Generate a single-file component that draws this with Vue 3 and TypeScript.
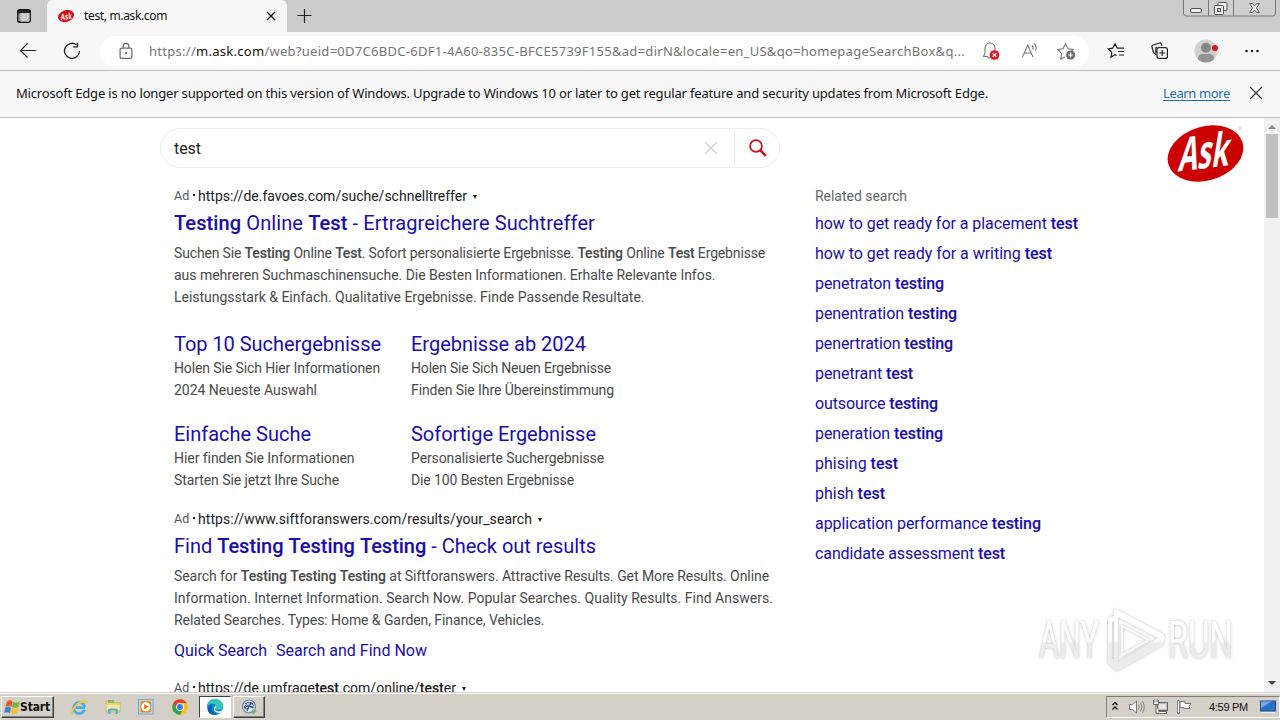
<script setup lang="ts">
interface Piece { t: string; b?: boolean }
interface Line { w: number; parts: Piece[] }
interface SiteLink { title: Line; lines: Line[] }
interface Ad { url: Line; title: Line; lines: Line[] }

// "*word*" marks an emphasised fragment
const line = (text: string, w: number): Line => ({
  w,
  parts: text.split('*').map((t, i) => ({ t, b: i % 2 === 1 })).filter((p) => p.t !== ''),
})

// Tracks a single line of text so that it spans the requested width
const fit = (el: HTMLElement, width: number) => {
  el.style.letterSpacing = '0px'
  const n = (el.textContent ?? '').length
  if (n) el.style.letterSpacing = `${(width - el.getBoundingClientRect().width) / n}px`
}
const vFit = {
  mounted: (el: HTMLElement, binding: { value: number }) => fit(el, binding.value),
}

const first: Ad = {
  url: line('https://de.favoes.com/suche/schnelltreffer', 269),
  title: line('*Testing* Online *Test* - Ertragreichere Suchtreffer', 421),
  lines: [
    line('Suchen Sie *Testing* Online *Test*. Sofort personalisierte Ergebnisse. *Testing* Online *Test* Ergebnisse', 591),
    line('aus mehreren Suchmaschinensuche. Die Besten Informationen. Erhalte Relevante Infos.', 541.5),
    line('Leistungsstark & Einfach. Qualitative Ergebnisse. Finde Passende Resultate.', 470.5),
  ],
}
const second: Ad = {
  url: line('https://www.siftforanswers.com/results/your_search', 334),
  title: line('Find *Testing* *Testing* *Testing* - Check out results', 422),
  lines: [
    line('Search for *Testing* *Testing* *Testing* at Siftforanswers. Attractive Results. Get More Results. Online', 595),
    line('Information. Internet Information. Search Now. Popular Searches. Quality Results. Find Answers.', 599),
    line('Related Searches. Types: Home & Garden, Finance, Vehicles.', 370.5),
  ],
}
const thirdUrl = line('https://de.umfrage*test*.com/online/*test*er', 258)

const siteLinks: SiteLink[] = [
  { title: line('Top 10 Suchergebnisse', 207), lines: [line('Holen Sie Sich Hier Informationen', 206), line('2024 Neueste Auswahl', 143)] },
  { title: line('Ergebnisse ab 2024', 175), lines: [line('Holen Sie Sich Neuen Ergebnisse', 200), line('Finden Sie Ihre Übereinstimmung', 203)] },
  { title: line('Einfache Suche', 137), lines: [line('Hier finden Sie Informationen', 180), line('Starten Sie jetzt Ihre Suche', 165)] },
  { title: line('Sofortige Ergebnisse', 185), lines: [line('Personalisierte Suchergebnisse', 193), line('Die 100 Besten Ergebnisse', 163)] },
]

const related: Line[] = [
  line('how to get ready for a placement *test*', 263),
  line('how to get ready for a writing *test*', 237),
  line('penetraton *testing*', 129),
  line('penentration *testing*', 142),
  line('penertration *testing*', 138),
  line('penetrant *test*', 98),
  line('outsource *testing*', 123),
  line('peneration *testing*', 128),
  line('phising *test*', 83),
  line('phish *test*', 70),
  line('application performance *testing*', 226),
  line('candidate assessment *test*', 190),
]
</script>

<template>
  <div class="screen">
    <header class="tabs">
      <svg class="tab-menu" width="16" height="16" viewBox="0 0 16 16">
        <rect x="1.700" y="1.700" width="12.600" height="12.600" rx="2" fill="none" stroke="#111" stroke-width="1.200" />
        <path d="M1.500 2h13v3h-13zM1.500 4h2.700v10h-2.700z" fill="#111" opacity=".9" />
        <rect x="2.500" y="5.500" width="1.300" height="7.500" fill="#bbb" />
      </svg>
      <div class="tab">
        <svg width="18" height="16" viewBox="0 0 18 16">
          <ellipse cx="9" cy="8" rx="8.200" ry="5.900" fill="#d5111c" transform="rotate(-18 9 8)" />
          <text x="3.500" y="11.500" font-family="Liberation Sans" font-size="9" font-weight="700" font-style="italic" fill="#fff" textLength="11" lengthAdjust="spacingAndGlyphs" transform="rotate(-8 9 8)">Ask</text>
        </svg>
        <span class="tab-title"><span v-fit="83" class="fit">test, m.ask.com</span></span>
        <svg class="tab-x" width="10" height="10" viewBox="0 0 10 10"><path d="M1 1l8 8M9 1l-8 8" stroke="#111" stroke-width="1.400" /></svg>
      </div>
      <svg class="plus" width="16" height="16" viewBox="0 0 16 16"><path d="M7.500 1v14M.5 7.500h14" stroke="#222" stroke-width="1.200" /></svg>
      <svg class="win" width="94" height="18" viewBox="0 0 94 18">
        <path d="M.5 0v13q0 3 3 3h86q3 0 3-3V0" fill="#cfcfcf" stroke="#777" />
        <path d="M25.500 0v16M50.500 0v16" stroke="#777" />
        <rect x="7.500" y="8.500" width="11" height="4" rx="1.500" fill="#eee" stroke="#555" />
        <rect x="35" y="2.500" width="9" height="8" rx="1" fill="#eee" stroke="#555" />
        <rect x="31.500" y="5.500" width="9" height="9" rx="1" fill="#eee" stroke="#555" />
        <rect x="34.500" y="8.500" width="3" height="3" fill="#ccc" stroke="#555" />
        <path d="M66.500 3.500h3l2 2.500 2-2.500h3l-3 4.500 3 4.500h-3l-2-2.500-2 2.500h-3l3-4.500z" fill="#eee" stroke="#666" />
      </svg>
    </header>

    <div class="toolbar">
      <svg class="back" width="18" height="18" viewBox="0 0 18 18"><path d="M17 8.500H1.500M8.500 1.500L1.500 8.500l7 7" fill="none" stroke="#222" stroke-width="1.200" /></svg>
      <svg class="reload" width="18" height="18" viewBox="0 0 18 18"><path d="M13.500 2.800A7.500 7.500 0 1 0 16.500 9M14.500 .8v4h-4.500" fill="none" stroke="#222" stroke-width="1.300" /></svg>
      <div class="address">
        <svg class="lock" width="14" height="18" viewBox="0 0 14 18"><rect x="1.100" y="6.100" width="11.800" height="10.300" rx="1.500" fill="none" stroke="#666" stroke-width="1.200" /><path d="M4.200 6V4.200a2.800 2.800 0 0 1 5.600 0V6" fill="none" stroke="#666" stroke-width="1.200" /><circle cx="7" cy="11.200" r="1.100" fill="#666" /></svg>
        <span class="url"><span v-fit="816" class="fit">https://<b>m.ask.com</b>/web?ueid=0D7C6BDC-6DF1-4A60-835C-BFCE5739F155&amp;ad=dirN&amp;locale=en_US&amp;qo=homepageSearchBox&amp;q...</span></span>
        <svg class="bell" width="18" height="20" viewBox="0 0 18 20"><path d="M6 15.500H1.500L3 12.500V7a5 5 0 0 1 10 0v3M5.500 15.800q1.500 2 3 .5" fill="none" stroke="#777" stroke-width="1.100" /><circle cx="12.500" cy="14" r="4.800" fill="#e81123" /><path d="M10.600 12.100l3.800 3.800m0-3.800l-3.800 3.800" stroke="#fff" stroke-width="1.300" /></svg>
        <svg class="aloud" width="18" height="18" viewBox="0 0 18 18"><path d="M1.500 15L6.800 3l5.200 12M3.500 11h6.500M10.800 3.500q2 1.500 1 4M13 1.500q3.500 3 1.500 7" fill="none" stroke="#777" stroke-width="1.100" /></svg>
        <svg class="fav" width="20" height="20" viewBox="0 0 20 20"><path d="M8 16l-4.300 2 .8-5.500-3.500-4 5-.8L8.500 3l2.600 4.700 5.200.8-2.500 2.500" fill="none" stroke="#777" stroke-width="1.100" /><circle cx="13.600" cy="14" r="4.600" fill="#6b6b6b" /><path d="M13.600 11.500v5M11.100 14h5" stroke="#fff" stroke-width="1.100" /></svg>
      </div>
      <svg class="stars" width="18" height="18" viewBox="0 0 18 18"><path d="M9.700 13.500L8 12.600l-4 2.700.8-5L1.200 6.800l4.600-.7L8 1.800l2.200 4.300H17M11 9.500h6M12 13h5" fill="none" stroke="#222" stroke-width="1.200" /></svg>
      <svg class="coll" width="18" height="18" viewBox="0 0 18 18"><path d="M4 11.500Q2.800 11.500 2.400 10L1 5q-.4-1.500 1-2L8.500 1q1.500-.3 2 1l.5 1.800M4.800 13V6.500q0-1.500 1.500-1.500" fill="none" stroke="#222" stroke-width="1.200" /><rect x="6" y="5.600" width="10.400" height="10.800" rx="2" fill="#f7f7f7" stroke="#222" stroke-width="1.200" /><path d="M11.200 8v6M8.200 11h6" stroke="#222" stroke-width="1.200" /></svg>
      <svg class="avatar" width="24" height="24" viewBox="0 0 24 24"><circle cx="12" cy="12" r="11.500" fill="#d2d0ce" /><circle cx="12" cy="8.700" r="5" fill="#85858a" /><path d="M4 20.500q0-5.500 4-5.500h8q4 0 4 5.500Q16.500 23.500 12 23.500T4 20.500" fill="#949494" /><circle cx="21" cy="9" r="3" fill="#e5101c" /></svg>
      <svg class="dots" width="16" height="6" viewBox="0 0 16 6"><g fill="#222"><circle cx="2.500" cy="3" r="1.300" /><circle cx="8" cy="3" r="1.300" /><circle cx="13.500" cy="3" r="1.300" /></g></svg>
    </div>

    <div class="notice">
      <span v-fit="972" class="fit">Microsoft Edge is no longer supported on this version of Windows. Upgrade to Windows 10 or later to get regular feature and security updates from Microsoft Edge.</span>
      <a class="learn"><span v-fit="67" class="fit">Learn more</span></a>
      <svg width="14" height="14" viewBox="0 0 14 14"><path d="M1 1l12 12M13 1L1 13" stroke="#333" stroke-width="1.200" /></svg>
    </div>

    <div class="view">
      <main class="page">
        <section class="main">
          <div class="search">
            <span class="query"><span v-fit="27" class="fit">test</span></span>
            <svg class="clear" width="14" height="14" viewBox="0 0 14 14"><path d="M1 1l12 12M13 1L1 13" stroke="#d8d8d8" stroke-width="1.700" /></svg>
            <span class="go"><svg width="18" height="18" viewBox="0 0 18 18"><circle cx="7" cy="7" r="5.900" fill="none" stroke="#cf1014" stroke-width="1.700" /><path d="M11.200 11.200l5.600 5.600" stroke="#cf1014" stroke-width="2.500" /></svg></span>
          </div>

          <template v-for="(ad, n) in [first, second]" :key="n">
            <article class="ad">
              <div class="source"><span class="mark">Ad</span><i class="dot"></i><span v-fit="ad.url.w" class="fit"><template v-for="(p, i) in ad.url.parts" :key="i">{{ p.t }}</template></span><i class="caret"></i></div>
              <h2><span v-fit="ad.title.w" class="fit"><span v-for="(p, i) in ad.title.parts" :key="i" :class="{ strong: p.b }">{{ p.t }}</span></span></h2>
              <p v-for="(l, k) in ad.lines" :key="k"><span v-fit="l.w" class="fit"><span v-for="(p, i) in l.parts" :key="i" :class="{ strong: p.b }">{{ p.t }}</span></span></p>
            </article>
            <div v-if="n === 0" class="links">
              <div v-for="(s, k) in siteLinks" :key="k">
                <h3><span v-fit="s.title.w" class="fit">{{ s.title.parts[0].t }}</span></h3>
                <p v-for="(l, j) in s.lines" :key="j"><span v-fit="l.w" class="fit">{{ l.parts[0].t }}</span></p>
              </div>
            </div>
          </template>
          <div class="quick"><span v-fit="93" class="fit">Quick Search</span><i></i><span v-fit="151" class="fit">Search and Find Now</span></div>
          <div class="source last"><span class="mark">Ad</span><i class="dot"></i><span v-fit="thirdUrl.w" class="fit"><span v-for="(p, i) in thirdUrl.parts" :key="i" :class="{ strong: p.b }">{{ p.t }}</span></span><i class="caret"></i></div>
        </section>

        <aside class="related">
          <div class="heading"><span v-fit="92" class="fit">Related search</span></div>
          <a v-for="(r, k) in related" :key="k"><span v-fit="r.w" class="fit"><span v-for="(p, i) in r.parts" :key="i" :class="{ strong: p.b }">{{ p.t }}</span></span></a>
        </aside>

        <svg class="ask" width="80" height="60" viewBox="0 0 80 60">
          <ellipse cx="38.500" cy="29.500" rx="38.700" ry="27" fill="#cc0000" transform="rotate(-17 38.500 29.500)" />
          <text transform="translate(10.500 47.500) rotate(-7) skewX(-16)" font-family="Open Sans, Liberation Sans" font-weight="700" font-size="46" fill="#fff" textLength="51" lengthAdjust="spacingAndGlyphs">Ask</text>
          <circle cx="73" cy="4" r="2" fill="#e3e0ea" />
        </svg>
      </main>
      <div class="scroll"><i class="up"></i><i class="thumb"></i><i class="down"></i></div>

      <svg class="watermark" width="206" height="70" viewBox="0 0 206 70">
        <defs>
          <linearGradient id="fade" x1="0" y1="0" x2="0" y2="1"><stop offset=".5" stop-color="#fff" /><stop offset=".56" stop-color="#ececec" /></linearGradient>
          <filter id="halo" x="-20%" y="-20%" width="140%" height="140%"><feDropShadow dx="0" dy="0" stdDeviation="1.600" flood-color="#888" flood-opacity=".6" /></filter>
        </defs>
        <g filter="url(#halo)" font-family="Roboto, Liberation Sans" font-size="51" font-weight="400" fill="url(#fade)">
          <text x="5" y="53" textLength="60" lengthAdjust="spacingAndGlyphs">ANY</text>
          <text x="134" y="53" textLength="65" lengthAdjust="spacingAndGlyphs">RUN</text>
          <path d="M80 6q0-3 4-1l45 24q3 3 1 6l-1 5-44 25q-3 2-5-1l-4-4q-2 0-2-4V16q0-3 3-4l3-1zM84 12v45l40-24zM78 17v37h2V16z" fill="url(#fade)" fill-rule="evenodd" />
          <path d="M88 21v29l27-15z" fill="none" stroke="#fafafa" stroke-width="2" />
        </g>
      </svg>
    </div>

    <footer class="taskbar">
      <div class="start">
        <svg width="16" height="16" viewBox="0 0 16 16"><path d="M3 2.500q3-2.500 5.500 0L7.500 8Q4.500 5.500 1.500 8z" fill="#e9552b" /><path d="M9 3q3 1.500 6.500-.5l-1 5.500q-3 1.500-6.500 0z" fill="#72b63c" /><path d="M1.300 8.700q3-2.500 5.700 0l-1 5.500q-3-2-5.700 0z" fill="#3a82d0" /><path d="M7.800 9q3 1.500 6.500-.3l-1 5.300q-3 1.700-6.500 0z" fill="#f8be26" /></svg>
        <b><span v-fit="30" class="fit">Start</span></b>
      </div>
      <div class="apps">
        <span><svg width="18" height="18" viewBox="0 0 18 18"><path d="M15 9.700H5.800M14.500 11.800A5.600 5.600 0 1 1 14.700 8.800" fill="none" stroke="#4aaee6" stroke-width="2.800" /><path d="M1 15Q2 8 9 4t8-1.500q0 2-2 4Q15.500 4 14 4 5 7 3 14q-1 3 1 2-2 1.500-3-1" fill="#f1c644" /></svg></span>
        <span><svg width="18" height="18" viewBox="0 0 18 18"><path d="M2 3h6l1 1.500h7V14H2z" fill="#efd371" stroke="#c9a33c" stroke-width=".6" /><path d="M4 2h6v3H4z" fill="#83bd73" /><path d="M2.500 7h13v5h-13z" fill="#f8e8a7" /><path d="M4 16v-4q0-1.500 1.500-1.500h7Q14 10.500 14 12v4h-2.500v-3.500h-5V16z" fill="#55aedc" /></svg></span>
        <span><svg width="18" height="18" viewBox="0 0 18 18"><rect x="1.500" y="1.500" width="14.500" height="14.500" fill="#b8dcf0" stroke="#6ea6d2" /><rect x="3.300" y="3" width="11" height="11.500" rx="2" fill="#f58713" /><circle cx="8.800" cy="8.800" r="4.500" fill="#fff" /><path d="M7.200 6v5.600l4.300-2.800z" fill="#e96c0c" /></svg></span>
        <span><svg width="18" height="18" viewBox="0 0 18 18"><circle cx="9" cy="9" r="7.800" fill="#fbc116" /><path d="M2.250 5.100A7.800 7.800 0 0 1 15.750 5.100H9L5.750 10.900z" fill="#e33b2e" /><path d="M2.250 5.100A7.800 7.800 0 0 0 9 16.800L12.200 10.900H5.750z" fill="#2da44e" /><circle cx="9" cy="9" r="3.900" fill="#fff" /><circle cx="9" cy="9" r="3" fill="#367de0" /></svg></span>
        <span class="on"><svg width="18" height="18" viewBox="0 0 18 18"><circle cx="9" cy="9" r="8" fill="#1687d2" /><path d="M1 9Q1.500 1 9 1t8 6.500Q17 11.500 12.500 11.500T10.500 9.500Q11 6 6.500 5.500 2.500 5.200 1 9" fill="#35c8b6" /><path d="M5.500 9.500q-.5 5 6 6.500Q5 18.200 2.300 13.500 1 7.500 7 6.200q-1.500 1.300-1.500 3.300" fill="#0c59a4" /><path d="M10.500 9.500q-2 1-1.200 2.500 2 2.500 6.200.5 1-.5.700.3-1 1.700-2 2.200Q9 15 8 11.500 7.600 8.500 10 8z" fill="#fff" /></svg></span>
        <span class="raised"><svg width="18" height="18" viewBox="0 0 18 18"><circle cx="9" cy="8.500" r="6.500" fill="#dfe8f3" stroke="#6d809c" stroke-width="1.200" /><path d="M5 6q4-3 8 0M4.500 10q4-4 9 0M7 13l4-9" stroke="#2f4c80" fill="none" stroke-width="1.100" /><circle cx="6.500" cy="9" r="2" fill="none" stroke="#2f4c80" /><circle cx="11.500" cy="7.500" r="1.800" fill="none" stroke="#2f4c80" /><path d="M10.500 13.500l4-3 2 3-3.500 3z" fill="#7ba98c" /></svg></span>
      </div>
      <div class="tray">
        <svg class="chev" width="8" height="10" viewBox="0 0 8 10"><path d="M1.500 4L4 1.500 6.500 4M1.500 8.500L4 6l2.500 2.500" fill="none" stroke="#111" stroke-width="1.400" /></svg>
        <svg class="vol" width="18" height="16" viewBox="0 0 18 16"><path d="M1.500 5.500h3L8.500 2v12L4.500 10.500h-3z" fill="#fff" stroke="#777" /><path d="M10.500 5.500q1.500 2.500 0 5M12.500 3.500q3 4.500 0 9M14.500 2q3.500 6 0 12" fill="none" stroke="#888" /></svg>
        <svg class="net" width="18" height="16" viewBox="0 0 18 16"><rect x="5.500" y="3.500" width="10" height="8" fill="#bbb" stroke="#666" /><path d="M7 5h7v5H7z" fill="#e4e4e4" /><path d="M6.500 14.500h8v-2h-8z" fill="#fff" stroke="#666" /><path d="M1.500 1v4.500h5V1M3 .5v3M5 .5v3M4 5.500v9h3" stroke="#666" fill="#fff" /></svg>
        <svg class="flag" width="18" height="16" viewBox="0 0 18 16"><path d="M1.500 1.500h2v13h-2z" fill="#fff" stroke="#777" stroke-width=".9" /><path d="M4 2.500h5v2h6l-2 3 1 2H8v-1H4z" fill="#fff" stroke="#777" /></svg>
        <span class="clock"><span v-fit="39" class="fit">4:59 PM</span></span>
        <svg class="desk" width="16" height="14" viewBox="0 0 16 14"><rect x=".5" y="1" width="15" height="10" fill="#2a70c8" stroke="#234c86" /><path d="M1 1.500h11Q7 4 1 8z" fill="#6dabea" /><path d="M1 12.500h14" stroke="#e8eef5" /></svg>
      </div>
    </footer>
  </div>
</template>

<style>
html, body { margin: 0; overflow: hidden; background: #fff; }
</style>

<style scoped>
.screen { width: 1280px; height: 720px; display: flex; flex-direction: column; overflow: hidden; font-family: "Noto Sans", "Open Sans", sans-serif; font-size: 12px; color: #111; }
.screen * { box-sizing: border-box; }
svg { display: block; flex: none; }
.fit { display: inline-block; white-space: pre; }
p, h2, h3 { margin: 0; }

.tabs { flex: none; height: 32px; display: flex; align-items: flex-start; background: #cbcbcb; }
.tab-menu { margin: 8px 0 0 16px; }
.tab { width: 240px; height: 32px; margin-left: 15px; padding: 0 11px 0 10px; display: flex; align-items: center; background: #f7f7f7; border-radius: 6px 6px 0 0; }
.tab-title { margin-left: 9px; flex: 1; font-size: 12px; line-height: 16px; }
.plus { margin: 8px 0 0 10px; }
.win { margin: 0 3px 0 auto; }

.toolbar { flex: none; height: 39px; display: flex; align-items: center; background: #f7f7f7; border-bottom: 1px solid #bcbcbc; }
.back { margin-left: 19px; }
.reload { margin-left: 26px; }
.address { width: 989px; height: 31px; margin-left: 19px; padding-left: 19px; display: flex; align-items: center; background: #fff; border-radius: 16px; }
.url { margin-left: 16px; width: 816px; color: #757575; font-size: 13px; line-height: 20px; }
.url b { font-weight: 400; color: #111; }
.bell { margin-left: 17px; }
.aloud { margin-left: 21px; }
.fav { margin-left: 18px; }
.stars { margin-left: 18px; }
.coll { margin-left: 26px; }
.avatar { margin-left: 25px; }
.dots { margin-left: 26px; }

.notice { flex: none; height: 47px; padding: 0 17px 2px 16px; display: flex; align-items: center; background: #f7f7f7; border-bottom: 1px solid #bcbcbc; font-size: 13px; }
.learn { margin: 0 19px 0 auto; color: #1a6fb5; }
.learn .fit { text-decoration: underline; text-underline-offset: 2px; }

.view { flex: 1; min-height: 0; display: flex; position: relative; font-family: Roboto, sans-serif; }
.page { flex: 1; display: flex; overflow: hidden; }
.main { width: 620px; margin-left: 160px; padding-top: 10px; flex: none; }
.search { height: 40px; display: flex; align-items: center; border: 1px solid #ececec; border-radius: 20px; margin-bottom: 17px; }
.query { flex: 1; padding-left: 13px; font-size: 16px; color: #222; }
.clear { margin-right: 16px; }
.go { width: 45px; height: 34px; padding-left: 14px; display: flex; align-items: center; border-left: 1px solid #e6e6e6; }

.ad, .links, .quick, .last { margin-left: 14px; }
.source { height: 22px; display: flex; align-items: center; font-size: 14px; line-height: 22px; color: #1b1b1b; }
.mark { width: 15px; font-size: 12.5px; color: #555; }
.dot { width: 2px; height: 2px; margin: 0 3px 2px 4px; background: #222; }
.caret { margin-left: 6px; border: 2.5px solid transparent; border-top: 4px solid #222; border-bottom: 0; margin-top: 2px; }
h2 { height: 28px; margin: 2px 0 5px; font-size: 20px; line-height: 28px; font-weight: 400; color: #1a0dab; }
p { height: 22px; font-size: 14px; line-height: 22px; color: #4a4a4a; }
.strong { font-weight: 500; -webkit-text-stroke: .1px currentColor; }
.links { display: grid; grid-template-columns: 237px 237px; row-gap: 20px; margin-top: 23px; margin-bottom: 17px; }
h3 { height: 26px; font-size: 20px; line-height: 26px; font-weight: 400; color: #1a0dab; }
.quick { margin-top: 9px; margin-bottom: 15px; height: 22px; display: flex; font-size: 16px; line-height: 22px; color: #1a0dab; }
.quick i { width: 1px; height: 1px; margin: 6px 4px 0; background: #999; }

.related { margin-left: 35px; padding-top: 67px; width: 300px; flex: none; color: #1a0dab; }
.heading { height: 24px; line-height: 22px; font-size: 14px; color: #666; }
.related a { display: block; height: 30px; line-height: 30px; font-size: 16px; }
.ask { margin: 6px 0 0 52px; overflow: visible; }

.scroll { flex: none; width: 16px; background: #f1f1f1; display: flex; flex-direction: column; align-items: center; }
.up { border: 4px solid transparent; border-bottom: 4px solid #888; border-top: 0; margin-top: 7px; }
.thumb { width: 12px; height: 84px; margin-top: 5px; background: #c1c1c1; }
.down { border: 4px solid transparent; border-top: 4px solid #444; border-bottom: 0; margin: auto 0 7px; }
.watermark { position: absolute; left: 1034px; top: 487px; }

.taskbar { flex: none; height: 28px; display: flex; align-items: center; padding: 1px 0 0 1px; background: #d4d0c8; border-top: 1px solid #d4d0c8; box-shadow: inset 0 1px #fff; }
.start { width: 53px; height: 22px; padding-left: 2px; display: flex; align-items: center; gap: 0; border: 1px solid; border-color: #fff #404040 #404040 #fff; box-shadow: inset -1px -1px #808080; font-family: "DejaVu Sans Condensed", "DejaVu Sans", sans-serif; font-size: 12px; }
.apps { margin-left: 8px; display: flex; }
.apps span { width: 33.8px; height: 22px; display: flex; align-items: center; justify-content: center; }
.apps .on { width: 32px; margin-left: 2px; background: #fff; border: 1px solid; border-color: #404040 #fff #fff #404040; }
.apps .raised { width: 32px; margin-left: 2px; border: 1px solid; border-color: #fff #404040 #404040 #fff; box-shadow: inset -1px -1px #808080; }
.tray { margin-left: auto; width: 174px; height: 22px; display: flex; align-items: center; border: 1px solid; border-color: #808080 #fff #fff #808080; }
.chev { margin: 0 0 3px 4px; }
.vol { margin-left: 9px; }
.net { margin-left: 6px; }
.flag { margin-left: 6px; }
.clock { margin-left: 15px; width: 39px; font-family: "Liberation Sans", sans-serif; font-size: 11px; }
.desk { margin-left: 12px; }
</style>
